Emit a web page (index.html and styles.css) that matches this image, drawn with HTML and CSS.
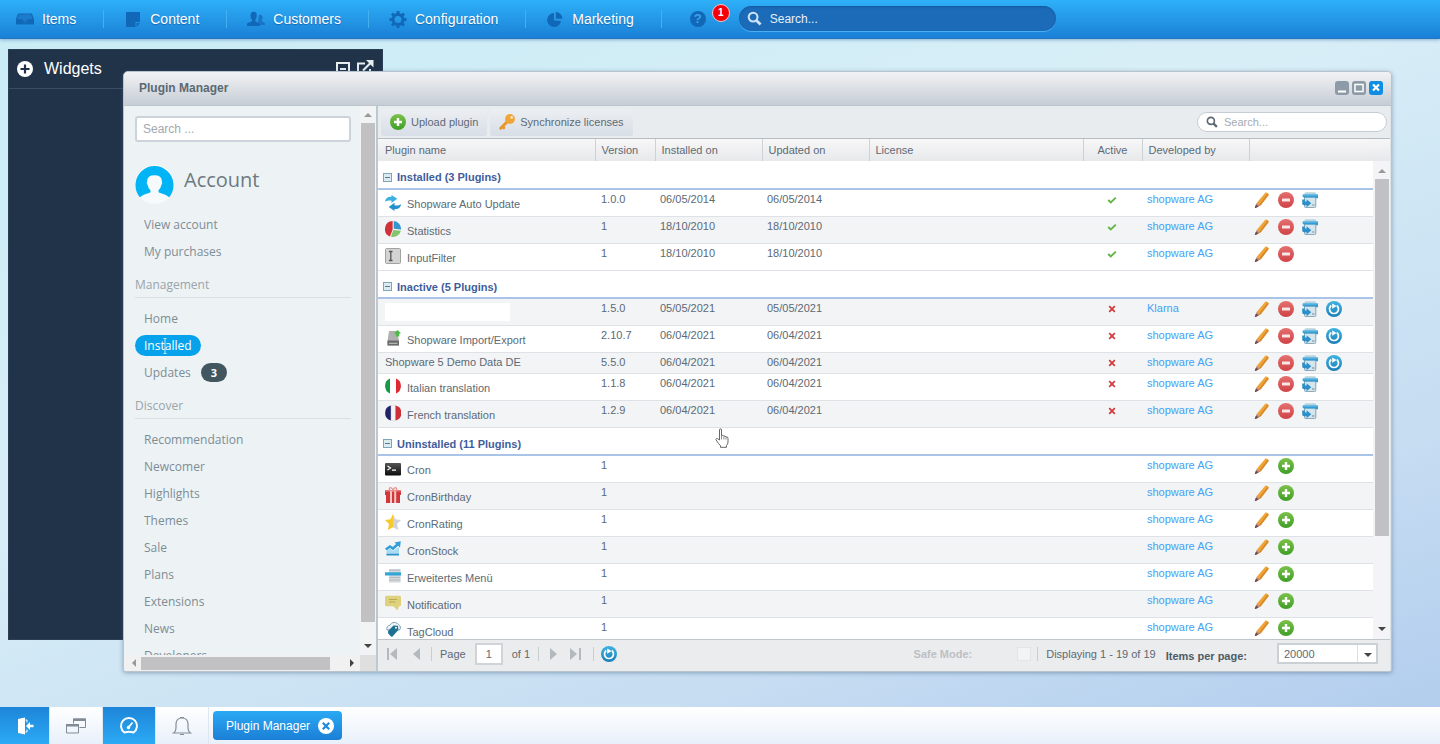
FILE: index.html
```html
<!DOCTYPE html>
<html lang="en">
<head>
  <meta charset="UTF-8">
  <meta name="viewport" content="width=device-width, initial-scale=1.0">
  <title>Plugin Manager</title>
  <link rel="stylesheet" href="styles.css">
</head>
<body>
  <!-- icon sprite -->
  <svg class="sprite" aria-hidden="true">
    <defs>
      <linearGradient id="g-red" x1="0" y1="0" x2="0" y2="1"><stop offset="0" stop-color="#e4706f"/><stop offset="1" stop-color="#cf4346"/></linearGradient>
      <linearGradient id="g-green" x1="0" y1="0" x2="0" y2="1"><stop offset="0" stop-color="#7cc14a"/><stop offset="1" stop-color="#3f9e26"/></linearGradient>
      <linearGradient id="g-blue" x1="0" y1="0" x2="0" y2="1"><stop offset="0" stop-color="#3fb3e2"/><stop offset="1" stop-color="#1c7fb8"/></linearGradient>
      <linearGradient id="g-dark" x1="0" y1="0" x2="0" y2="1"><stop offset="0" stop-color="#555"/><stop offset="1" stop-color="#0c0c0e"/></linearGradient>
    </defs>
    <symbol id="i-pencil" viewBox="0 0 16 16"><path d="M11.300 .7c1-1.100 3.900 .9 3.300 2.400L6.600 13.500 2.800 10.700z" fill="#f0a337"/><path d="M13.600 1.500 14.700 3 6.600 13.500 5.200 12.500z" fill="#d98a2a"/><path d="M2.800 10.700 6.600 13.500 1.600 15.900c-.5.100-.8-.1-.7-.6z" fill="#c08a6c"/><path d="M2 12.500 4.500 14.500 1.600 15.900c-.5.100-.8-.1-.7-.6z" fill="#6e4a4c"/></symbol>
    <symbol id="i-minus" viewBox="0 0 16 16"><circle cx="8" cy="8" r="8" fill="url(#g-red)"/><rect x="4" y="6.500" width="8" height="3" rx=".5" fill="#f9e6e6"/></symbol>
    <symbol id="i-plus" viewBox="0 0 16 16"><circle cx="8" cy="8" r="8" fill="url(#g-green)"/><path d="M6.800 4h2.400v2.800H12v2.400H9.200V12H6.800V9.200H4V6.800h2.800z" fill="#fff"/></symbol>
    <symbol id="i-reinstall" viewBox="0 0 16 16"><path d="M2.500 1.500Q2.500 .3 4 .3h8.500q1.500 0 1.500 1.200V3H2.500z" fill="#b9d3df"/><path d="M2.500 5h11.300v9.300q0 1.300-1.300 1.300H3.800q-1.300 0-1.300-1.300z" fill="#d5e5ed" stroke="#86a3b1"/><path d="M1 2.300h14q1 0 1 1v2.900h-2.300V5.500H2Q-.3 5.300 1 2.300z" fill="#359bd3"/><path d="M1.200 2.300h14v1.200H.8z" fill="#72c3ea"/><path d="M.2 7.500v3.900q0 1.800 1.800 1.800h2.600V15.300L9.300 11.200 4.600 7.200V9.500H2.800V7.500z" fill="#2c8fc9"/><path d="M10 13h2.500" stroke="#8197a3" stroke-width="1.200"/></symbol>
    <symbol id="i-refresh" viewBox="0 0 16 16"><circle cx="8" cy="8" r="8" fill="url(#g-blue)"/><path d="M5.200 4.500A4.500 4.500 0 1 0 10.800 4.500" fill="none" stroke="#fff" stroke-width="1.700"/><path d="M6.200 2.500v5.200L10.600 5z" fill="#fff"/></symbol>
    <symbol id="i-check" viewBox="0 0 10 10"><path d="M1.200 5 3.800 7.500 8.800 2.600" fill="none" stroke="#62b646" stroke-width="1.900"/></symbol>
    <symbol id="i-cross" viewBox="0 0 10 10"><path d="M2.200 2.200 7.800 7.800M7.800 2.200 2.200 7.800" stroke="#d33c3c" stroke-width="1.800"/></symbol>
    <symbol id="i-key" viewBox="0 0 16 16"><path d="M9 7 1.700 14.200M3.500 12.500 4.800 13.800" stroke="#e9962c" stroke-width="3" stroke-linecap="round"/><circle cx="11" cy="5" r="4.900" fill="#f0a637"/><circle cx="12.700" cy="3.400" r="1.300" fill="#f4e9d8"/></symbol>
    <symbol id="i-search" viewBox="0 0 16 16"><circle cx="6.500" cy="6.500" r="4.700" fill="none" stroke="currentColor" stroke-width="2.200"/><path d="M9.800 9.800 14.500 14.500" stroke="currentColor" stroke-width="3"/></symbol>

    <symbol id="i-update" viewBox="0 0 16 16"><path d="M0 6.800C.5 2.800 3.500 1.300 6.500 1.800V0L12.300 3.800 6.500 8V5.700C4 5.200 2 5.500 0 6.800z" fill="#3db0e2"/><path d="M16 9.200C15.500 13.200 12.500 14.500 9.500 14V16L3.700 12 9.500 7.800V10.200C12 10.700 14 10.500 16 9.200z" fill="#2391cb"/></symbol>
    <symbol id="i-stats" viewBox="0 0 16 16"><path d="M7.600 .1v8.400L5 15.500A8 8 0 0 1 7.600 .1z" fill="#cf3338"/><path d="M8.700 .1A7.900 7.900 0 0 1 16 8.500L8.700 7.800z" fill="#3597d0"/><path d="M8.300 9 15.900 9.800A8 8 0 0 1 6 15.700z" fill="#84c46c"/></symbol>
    <symbol id="i-input" viewBox="0 0 16 16"><rect x=".5" y=".5" width="15" height="15" rx="1" fill="#d3d3d3" stroke="#a2a2a2"/><path d="M4 3.500H7.500M4 12.500H7.500M5.800 3.500V12.500" stroke="#555" stroke-width="1.300"/></symbol>
    <symbol id="i-drive" viewBox="0 0 16 16"><path d="M4 1H12L14 11V15.500H2.500V11z" fill="#b0b0b0"/><path d="M2.500 10.500H14V15.500H2.500z" fill="#6a6a6a"/><path d="M4 13.300H12.500" stroke="#c9c9c9"/><path d="M12.500 0 16 3.300 14.200 3.800V6.500H10.800V3.800L9 3.300z" fill="#4dbb48"/></symbol>
    <symbol id="i-italy" viewBox="0 0 16 16"><path d="M5 .6A8 8 0 0 0 5 15.400z" fill="#169a4a"/><path d="M5 .6Q8-.4 11 .6V15.400Q8 16.400 5 15.400z" fill="#fff"/><path d="M11 .6A8 8 0 0 1 11 15.400z" fill="#dc2a30"/></symbol>
    <symbol id="i-france" viewBox="0 0 16 16"><path d="M6 .6A7.600 7.600 0 0 0 6 15.400z" fill="#22246b"/><path d="M6 .6Q8 .1 10.500 .6V15.400Q8 15.900 6 15.400z" fill="#f5f3f5" stroke="#ccc" stroke-width=".4"/><path d="M10.500 .6A7.600 7.600 0 0 1 10.500 15.400z" fill="#cf3038"/></symbol>
    <symbol id="i-cron" viewBox="0 0 16 16"><rect y="2" width="16" height="12.500" rx="1" fill="url(#g-dark)"/><path d="M2.500 5 5.500 7 2.500 9M7 9.200H11" fill="none" stroke="#fff" stroke-width="1.200"/></symbol>
    <symbol id="i-gift" viewBox="0 0 16 16"><path d="M0 3.500H16V8H15V16H1V8H0z" fill="#d2383b"/><path d="M0 3.500H16V5H0z" fill="#e25b5b"/><path d="M5 3.500H7V16H5zM9.200 3.500H11.200V16H9.200z" fill="#f6c9c4"/><path d="M8 3.700C3 4.500 4 .3 5.700 .7 7 1 7.800 2.500 8 3.700 8.300 2.500 9 1 10.300 .7 12 .3 13 4.500 8 3.700z" fill="none" stroke="#e79693" stroke-width="1.300"/></symbol>
    <symbol id="i-star" viewBox="0 0 16 16"><path d="M8 0 10.500 5.300 16 6 12 10 13.200 16 8 13.200z" fill="#d2d2d6"/><path d="M8 0 5.500 5.300 0 6 4 10 2.800 16 8 13.200z" fill="#f7ca2b"/></symbol>
    <symbol id="i-stock" viewBox="0 0 16 16"><path d="M.8 8.500 5 5.500 8 7.500 12.500 3.500" fill="none" stroke="#31a0d8" stroke-width="2.600"/><path d="M9.500 1.500 15.800 .3 15 6.500z" fill="#31a0d8"/><path d="M1.500 10 5 7.800 8.200 10 14 6V14.500H1.500z" fill="#a8daf2"/><path d="M1.500 13.600H14" stroke="#2f93c8" stroke-width="1.600"/></symbol>
    <symbol id="i-menu" viewBox="0 0 16 16"><path d="M4 1H15.500V14.500H4z" fill="#d3d8dc"/><path d="M4 2.200H15.500M4 9.500H15.500M4 12H15.500" stroke="#b4bbc1"/><path d="M0 4.300H16V7.500H0z" fill="#34a5d7"/></symbol>
    <symbol id="i-note" viewBox="0 0 16 16"><path d="M1.500 .8H14.500Q16 .8 16 2.300V9.700Q16 11.200 14.500 11.200H14L12.500 15.500 8.300 11.200H1.500Q0 11.200 0 9.700V2.300Q0 .8 1.500 .8z" fill="#dfd27e"/><path d="M4 4.500H12M4 7H10.500" stroke="#b9a953" stroke-width="1.100"/></symbol>
    <symbol id="i-tag" viewBox="0 0 16 16"><path d="M2 8A4 4 0 0 1 5 3.200 5 5 0 0 1 13.500 2.500 3.500 3.500 0 0 1 14.500 8z" fill="#eef4f7" stroke="#7d9fae"/><path d="M3.500 8.500 8.500 3.500 13 3.800 13.300 8 7.500 14.500Q6.800 15 6 14.500L3.300 11.500Q2.500 10 3.500 8.500z" fill="#1f7193"/><circle cx="11" cy="5.800" r="1" fill="#fff"/></symbol>
  </svg>

  <header class="topbar">
    <nav class="menu">
      <a href="#"><svg viewBox="0 0 18 18"><path d="M2.500 4H15.500L17.500 9.500H12Q11.500 12 9 12T6 9.500H.5z" fill="#1c7ccc" stroke="#1268b8" stroke-width="1.200"/><path d="M0 9.500H5.500Q6.500 12.500 9 12.500T12.500 9.500H18V14.500H0z" fill="#1268b8"/></svg>Items</a>
      <a href="#"><svg viewBox="0 0 18 18"><path d="M2 2H16V12H11.500V17H2z" fill="#1268b8"/><path d="M12.500 13H16L12.500 17z" fill="#1268b8"/></svg>Content</a>
      <a href="#"><svg viewBox="0 0 18 18"><path d="M12 5A2.500 2.500 0 0 1 15.500 8Q15.200 10 14.500 11L18 13V15H13.500L11 11.500z" fill="#1a74c4"/><path d="M3.500 5.500A3 3.500 0 0 1 9.800 5.500Q9.800 8.500 8.300 10V11.300L13 13.500V16H0V13.500L5 11.300V10Q3.500 8.500 3.500 5.500z" fill="#1268b8"/></svg>Customers</a>
      <a href="#"><svg viewBox="0 0 18 18"><circle cx="9" cy="9.500" r="5" fill="none" stroke="#1268b8" stroke-width="3"/><path d="M9 1V4M9 15V18M.5 9.500H3.500M14.500 9.500H17.500M3 3.500 5 5.500M13 13.500 15 15.500M15 3.500 13 5.500M5 13.500 3 15.500" stroke="#1268b8" stroke-width="3"/></svg>Configuration</a>
      <a href="#"><svg viewBox="0 0 18 18"><path d="M8 3A7 7 0 1 0 15 11L8 10.500z" fill="#1268b8"/><path d="M9.800 1.800A7.500 7.500 0 0 1 16.500 8.800H9.800z" fill="#1268b8"/></svg>Marketing</a>
    </nav>
    <button class="help" aria-label="Help">?</button>
    <span class="alert-count">1</span>
    <label class="top-search">
      <svg><use href="#i-search"/></svg>
      <input type="text" placeholder="Search..." aria-label="Search">
    </label>
  </header>

  <main class="desktop">
    <section class="widgets">
      <header>
        <svg viewBox="0 0 16 16"><circle cx="8" cy="8" r="8" fill="#fff"/><path d="M8 3.500V12.500M3.500 8H12.500" stroke="#20324a" stroke-width="2.200"/></svg>
        <h2>Widgets</h2>
        <button aria-label="Minimize"><svg viewBox="0 0 18 18"><path d="M3 3H15V16H3zM6 9H12" fill="none" stroke="#e8edf2" stroke-width="2"/></svg></button>
        <button aria-label="Detach"><svg viewBox="0 0 18 18"><path d="M9 3.500H2V16H14V9" fill="none" stroke="#e8edf2" stroke-width="2"/><path d="M7 10.500 14.500 3" stroke="#e8edf2" stroke-width="2.200"/><path d="M10 0H17.500V7.500z" fill="#e8edf2"/></svg></button>
      </header>
    </section>

    <section class="window">
      <header class="titlebar">
        <h1>Plugin Manager</h1>
        <button aria-label="Minimize"><svg viewBox="0 0 14 14"><path d="M3 10.500H11" stroke="#fff" stroke-width="2"/></svg></button>
        <button aria-label="Maximize"><svg viewBox="0 0 14 14"><path d="M3 3.500H11V10.500H3z" fill="none" stroke="#fff" stroke-width="1.500"/></svg></button>
        <button class="close" aria-label="Close"><svg viewBox="0 0 14 14"><path d="M4 3.500 10 9.500M10 3.500 4 9.500" stroke="#fff" stroke-width="2.200"/></svg></button>
      </header>

      <div class="window-body">
        <aside class="sidebar">
          <div class="side-main">
            <div class="side-content">
              <input class="side-search" type="text" placeholder="Search ..." aria-label="Search plugins">
              <div class="account">
                <svg viewBox="0 0 40 40"><circle cx="20" cy="20" r="20" fill="#f7fafb"/><path d="M5 33A19.500 19.500 0 1 1 35 33Q32 30.500 25 28.500C23.800 28 23.800 26.500 24.500 25.500Q26.500 23.500 27 20.500 28.500 19 27.500 17 28 10.500 20 10.500T12.500 17Q11.500 19 13 20.500 13.500 23.500 15.500 25.500C16.200 26.500 16.200 28 15 28.500Q8 30.500 5 33z" fill="#00b4f5"/></svg>
                <h2>Account</h2>
              </div>
              <nav class="side-nav">
                <a href="#">View account</a>
                <a href="#">My purchases</a>
              </nav>
              <h3>Management</h3>
              <nav class="side-nav">
                <a href="#">Home</a>
                <a href="#" class="active"><span>Installed<svg class="beam" viewBox="0 0 6 16"><path d="M1.500 .5H4.500M3 .5V15.500M1.500 15.500H4.500" stroke="#bfe4f7"/></svg></span></a>
                <a href="#">Updates <b>3</b></a>
              </nav>
              <h3>Discover</h3>
              <nav class="side-nav">
                <a href="#">Recommendation</a>
                <a href="#">Newcomer</a>
                <a href="#">Highlights</a>
                <a href="#">Themes</a>
                <a href="#">Sale</a>
                <a href="#">Plans</a>
                <a href="#">Extensions</a>
                <a href="#">News</a>
                <a href="#">Developers</a>
              </nav>
            </div>
            <div class="scroll-v">
              <i class="arrow up"></i><div class="thumb"></div><i class="arrow down"></i>
            </div>
          </div>
          <div class="scroll-h">
            <i class="arrow left"></i><div class="thumb"></div><i class="arrow right"></i><span class="corner"></span>
          </div>
        </aside>

        <div class="content">
          <div class="toolbar">
            <button><svg><use href="#i-plus"/></svg>Upload plugin</button>
            <button><svg><use href="#i-key"/></svg>Synchronize licenses</button>
            <label class="grid-search">
              <svg><use href="#i-search"/></svg>
              <input type="text" placeholder="Search..." aria-label="Search grid">
            </label>
          </div>

          <div class="grid">
            <div class="grid-view">
              <table>
                <colgroup>
                  <col class="c-name"><col class="c-version"><col class="c-date"><col class="c-date">
                  <col><col class="c-active"><col class="c-date"><col class="c-actions">
                </colgroup>
                <thead>
                  <tr>
                    <th>Plugin name</th><th>Version</th><th>Installed on</th><th>Updated on</th>
                    <th>License</th><th class="center">Active</th><th>Developed by</th><th></th>
                  </tr>
                </thead>
                <tbody id="rows"></tbody>
              </table>
            </div>
            <div class="scroll-v grid-scroll">
              <i class="arrow up"></i><div class="thumb"></div><i class="arrow down"></i>
            </div>
          </div>

          <footer class="paging">
            <button aria-label="First page"><svg viewBox="0 0 12 12"><path d="M1 0H3V12H1zM11 0V12L4 6z"/></svg></button>
            <button class="prev" aria-label="Previous page"><svg viewBox="0 0 12 12"><path d="M9 0V12L2 6z"/></svg></button>
            <i class="sep"></i>
            <label for="page">Page</label>
            <input id="page" type="text" value="1">
            <span class="of">of 1</span>
            <i class="sep"></i>
            <button aria-label="Next page"><svg viewBox="0 0 12 12"><path d="M3 0 10 6 3 12z"/></svg></button>
            <button class="last" aria-label="Last page"><svg viewBox="0 0 12 12"><path d="M0 0 7 6 0 12zM9 0H11V12H9z"/></svg></button>
            <i class="sep"></i>
            <button class="reload" aria-label="Refresh"><svg><use href="#i-refresh"/></svg></button>
            <label class="safe" for="safe">Safe Mode:</label>
            <input id="safe" type="checkbox" disabled>
            <i class="sep"></i>
            <span class="info">Displaying 1 - 19 of 19</span>
            <label class="per-page" for="size">Items per page:</label>
            <div class="combo">
              <select id="size"><option>20000</option></select>
              <i class="arrow down"></i>
            </div>
          </footer>
        </div>
      </div>
    </section>

    <svg class="pointer" viewBox="0 0 14 20"><path d="M4.500 12V2Q4.500 .8 5.500 .8T6.500 2V7.500Q8.500 6.800 9 8.200 10.500 7.500 11 9 13 8.500 13 10.500V14Q13 16 11.500 17.500V19.300H5.500V17.800Q4 16.500 1 11.800C.4 10.500 2.200 10 3 11z" fill="#fff" stroke="#666" stroke-width="1"/><path d="M6.500 8V11.500M8.900 8.500V11.500M11 9.500V11.500" stroke="#666" stroke-width=".8"/></svg>
  </main>

  <footer class="taskbar">
    <button class="blue logout" aria-label="Logout"><svg viewBox="0 0 20 20"><path d="M3 3 10 1.500V18.500L3 17z" fill="#fff"/><path d="M10.500 4H12V6.500M10.500 16H12V13.500" fill="none" stroke="#fff"/><path d="M11 10 15 6V8.800H18.500V11.200H15V14z" fill="#fff"/></svg></button>
    <button class="light" aria-label="Windows"><svg viewBox="0 0 20 20"><path d="M7.500 3H19.500V11.500H13.500M7.500 3V7.500M.5 8.500H12.500V17H.5z" fill="none" stroke="#818b96"/><path d="M7 2.500H20V5H7zM0 8H13V10.500H0z" fill="#818b96"/></svg></button>
    <button class="blue" aria-label="Widgets"><svg viewBox="0 0 20 20"><path d="M5.500 16.500A8 8 0 1 1 14.500 16.500Q10 15 5.500 16.500z" fill="none" stroke="#fff" stroke-width="2"/><path d="M9 12 13.500 6.500" stroke="#fff" stroke-width="1.800"/><circle cx="9.500" cy="11.500" r="1.700" fill="#fff"/></svg></button>
    <button class="light bell" aria-label="Notifications"><svg viewBox="0 0 20 20"><path d="M1.500 17Q4 15.500 4 11V7.500Q4.500 2 10 2T16 7.500V11Q16 15.500 18.500 17zM8 1.500H12M8 18.500H12" fill="none" stroke="#858d96" stroke-width="1.200"/></svg></button>
    <button class="task">Plugin Manager<svg viewBox="0 0 16 16"><circle cx="8" cy="8" r="8" fill="#fff"/><path d="M4.800 4.800 11.200 11.200M11.200 4.800 4.800 11.200" stroke="#1c8be0" stroke-width="2.200"/></svg></button>
  </footer>

  <script>
    // icon, name, version, installed, updated, active, vendor, actions
    const groups = [
      { title: 'Installed (3 Plugins)', rows: [
        ['update', 'Shopware Auto Update', '1.0.0', '06/05/2014', '06/05/2014', 'check', 'shopware AG', ['pencil', 'minus', 'reinstall']],
        ['stats', 'Statistics', '1', '18/10/2010', '18/10/2010', 'check', 'shopware AG', ['pencil', 'minus', 'reinstall']],
        ['input', 'InputFilter', '1', '18/10/2010', '18/10/2010', 'check', 'shopware AG', ['pencil', 'minus']]
      ]},
      { title: 'Inactive (5 Plugins)', rows: [
        ['', '', '1.5.0', '05/05/2021', '05/05/2021', 'cross', 'Klarna', ['pencil', 'minus', 'reinstall', 'refresh']],
        ['drive', 'Shopware Import/Export', '2.10.7', '06/04/2021', '06/04/2021', 'cross', 'shopware AG', ['pencil', 'minus', 'reinstall', 'refresh']],
        ['', 'Shopware 5 Demo Data DE', '5.5.0', '06/04/2021', '06/04/2021', 'cross', 'shopware AG', ['pencil', 'minus', 'reinstall', 'refresh']],
        ['italy', 'Italian translation', '1.1.8', '06/04/2021', '06/04/2021', 'cross', 'shopware AG', ['pencil', 'minus', 'reinstall']],
        ['france', 'French translation', '1.2.9', '06/04/2021', '06/04/2021', 'cross', 'shopware AG', ['pencil', 'minus', 'reinstall']]
      ]},
      { title: 'Uninstalled (11 Plugins)', rows: [
        ['cron', 'Cron'], ['gift', 'CronBirthday'], ['star', 'CronRating'], ['stock', 'CronStock'],
        ['menu', 'Erweitertes Menü'], ['note', 'Notification'], ['tag', 'TagCloud']
      ].map(r => [...r, '1', '', '', '', 'shopware AG', ['pencil', 'plus']]) }
    ];
    const labels = { pencil: 'Edit', minus: 'Uninstall', plus: 'Install', reinstall: 'Reinstall', refresh: 'Update' };
    const icon = name => `<svg><use href="#i-${name}"/></svg>`;

    let html = '';
    let count = 0;
    groups.forEach(group => {
      html += `<tr class="group"><td colspan="8"><button><i></i>${group.title}</button></td></tr>`;
      group.rows.forEach(([ico, name, version, installed, updated, active, vendor, actions]) => {
        const nameCell = ico ? `<div class="with-icon">${icon(ico)}${name}</div>` : (name || '<div class="blank"></div>');
        const compact = !ico && name ? 'compact' : '';
        html += `
          <tr class="${count++ % 2 ? 'alt' : ''} ${compact}">
            <td>${nameCell}</td><td>${version}</td><td>${installed}</td><td>${updated}</td><td></td>
            <td class="status">${active ? icon(active) : ''}</td>
            <td><a href="#">${vendor}</a></td>
            <td><div class="actions">${actions.map(a => `<button aria-label="${labels[a]}">${icon(a)}</button>`).join('')}</div></td>
          </tr>`;
      });
    });
    document.getElementById('rows').innerHTML = html;
  </script>
</body>
</html>
```
FILE: styles.css
```css
* { box-sizing: border-box; }
body {
  margin: 0;
  height: 100vh;
  display: flex;
  flex-direction: column;
  overflow: hidden;
  font-family: "Liberation Sans", Arial, sans-serif;
  font-size: 11px;
  color: #5c6a75;
  background: linear-gradient(160deg, #c8ecf5 0%, #d8eef7 40%, #c6ddf2 75%, #b0cbed 100%);
}
h1, h2, h3 { margin: 0; font-weight: normal; }
a { text-decoration: none; color: inherit; }
button, input, select { font: inherit; color: inherit; }
button {
  border: 0;
  padding: 0;
  background: none;
  cursor: pointer;
}
svg { display: block; flex: none; }
.sprite { position: absolute; width: 0; height: 0; }

/* top bar */
.topbar {
  height: 39px;
  flex: none;
  display: flex;
  align-items: center;
  padding-bottom: 1px;
  background: linear-gradient(#2eb0f8, #1a80d6);
  border-bottom: 1px solid #2576bf;
  box-shadow: 0 1px 3px rgba(60, 120, 180, .5);
  color: #fff;
}
.menu { display: flex; }
.menu a {
  display: flex;
  align-items: center;
  gap: 8px;
  height: 18px;
  padding: 0 27px 0 20px;
  border-right: 1px solid #46aff0;
  font-size: 14px;
  text-shadow: 0 1px 1px #1669b0;
}
.menu a:first-child { padding-left: 16px; }
.menu svg { width: 18px; height: 18px; }
.help {
  width: 16px;
  height: 16px;
  margin-left: 28px;
  border-radius: 50%;
  background: #1268b8;
  color: #3ba4ec;
  font-size: 13px;
  font-weight: bold;
  line-height: 16px;
}
.alert-count {
  width: 18px;
  height: 18px;
  margin: 0 9px 12px 6px;
  border: 1px solid #f3c5cc;
  border-radius: 50%;
  background: #f30008;
  font-size: 10px;
  font-weight: bold;
  line-height: 16px;
  text-align: center;
}
.top-search {
  display: flex;
  align-items: center;
  gap: 8px;
  width: 22%;
  height: 25px;
  padding: 0 8px;
  border-radius: 13px;
  background: #1b6bb8;
  box-shadow: 0 1px 0 #4aaef0, inset 0 1px 2px #1259a0;
}
.top-search svg { width: 15px; height: 15px; color: #cde3f5; }
.top-search input, .grid-search input {
  flex: 1;
  min-width: 0;
  padding: 0;
  border: 0;
  outline: 0;
  background: none;
}
.top-search input { font-size: 12px; }
.top-search input::placeholder { color: #e4f0fa; opacity: 1; }

/* desktop */
.desktop { flex: 1; position: relative; min-height: 0; }
.widgets {
  position: absolute;
  left: 8px;
  top: 10px;
  bottom: 67px;
  width: 375px;
  border: 1px solid #2c3e55;
  background: #213349;
}
.widgets header {
  display: flex;
  align-items: center;
  gap: 4px;
  height: 39px;
  padding: 0 8px;
  border-bottom: 1px solid #3a4d62;
  color: #fff;
}
.widgets header > svg { width: 16px; height: 16px; }
.widgets h2 { flex: 1; margin-left: 7px; font-size: 16px; }
.widgets button svg { width: 18px; height: 18px; }

.window {
  position: absolute;
  left: 123px;
  right: 48px;
  top: 32px;
  bottom: 35px;
  display: flex;
  flex-direction: column;
  border: 1px solid #b7c3cd;
  border-radius: 5px 5px 3px 3px;
  background: #edf2f4;
  box-shadow: 0 1px 4px rgba(70, 100, 130, .5);
  overflow: hidden;
}
.titlebar {
  display: flex;
  align-items: center;
  gap: 3px;
  height: 34px;
  flex: none;
  padding: 0 8px 2px 15px;
  background: linear-gradient(#f2f2f4, #c6cdd5);
  border-bottom: 1px solid #bdc5cc;
}
.titlebar h1 {
  flex: 1;
  font-size: 12px;
  font-weight: bold;
  color: #5b6973;
}
.titlebar button {
  width: 14px;
  height: 14px;
  border-radius: 3px;
  background: #8c9ba7;
}
.titlebar .close { background: #0f8ee2; }
.window-body {
  flex: 1;
  display: flex;
  min-height: 0;
  border-right: 1px solid #dfe4e8;
}

/* scrollbars */
.arrow {
  width: 0;
  height: 0;
  flex: none;
  border: 4px solid transparent;
}
.arrow.up { border-top: 0; border-bottom: 4px solid #999; }
.arrow.down { border-bottom: 0; border-top: 4px solid #444; }
.arrow.left { border-left: 0; border-right: 4px solid #999; }
.arrow.right { border-right: 0; border-left: 4px solid #444; }
.scroll-v {
  display: flex;
  flex-direction: column;
  align-items: center;
  width: 17px;
  flex: none;
  padding: 7px 0 8px;
  background: #f1f3f5;
}
.scroll-v .thumb { width: 14px; flex: 1; margin: 6px 0 22px; background: #c1c1c3; }
.scroll-h {
  display: flex;
  align-items: center;
  height: 16px;
  flex: none;
  padding-left: 8px;
  background: #f1f1f2;
}
.scroll-h .thumb { height: 13px; flex: 1; margin: 0 20px 0 5px; background: #c1c1c3; }
.corner { width: 16px; height: 16px; margin-left: 6px; background: #dfdfe0; }

/* sidebar */
.sidebar {
  display: flex;
  flex-direction: column;
  width: 254px;
  flex: none;
  border-right: 2px solid #bcc9d0;
  font-family: "Open Sans", sans-serif;
  font-size: 12px;
  color: #7d8d94;
}
.side-main { flex: 1; display: flex; min-height: 0; }
.side-content { flex: 1; padding: 10px 9px 0 11px; overflow: hidden; }
.side-main .scroll-v { padding-bottom: 7px; width: 16px; }
.side-search {
  display: block;
  width: 100%;
  height: 26px;
  padding: 0 6px;
  border: 2px solid #cdd3da;
  border-radius: 3px;
  background: #fff;
  font-family: "Liberation Sans", Arial, sans-serif;
  outline: 0;
}
.side-search::placeholder { color: #a3a9b0; opacity: 1; }
.account {
  display: flex;
  gap: 10px;
  margin: 23px 0 7px;
}
.account svg { width: 39px; height: 39px; }
.account h2 { font-size: 20px; line-height: 29px; color: #6c7a80; }
.side-nav a {
  display: flex;
  align-items: center;
  gap: 10px;
  height: 27px;
  padding-left: 9px;
}
.side-nav .active { padding-left: 0; }
.active span {
  position: relative;
  padding: 0 9px;
  border-radius: 11px;
  background: #06a3ec;
  color: #fff;
  line-height: 21px;
}
.beam {
  position: absolute;
  left: 27px;
  top: 3px;
  width: 6px;
  height: 16px;
}
.side-nav b {
  width: 26px;
  border-radius: 10px;
  background: #42565f;
  color: #fff;
  font-size: 11px;
  line-height: 19px;
  text-align: center;
}
.sidebar h3 {
  height: 33px;
  margin-bottom: 7px;
  border-bottom: 1px solid #d9dfe3;
  font-size: 12px;
  line-height: 40px;
  color: #99a5ac;
}

/* plugin list */
.content { flex: 1; display: flex; flex-direction: column; min-width: 0; }
.toolbar {
  display: flex;
  align-items: center;
  gap: 3px;
  height: 33px;
  flex: none;
  padding: 0 3px;
  background: #e9ecef;
  border-bottom: 1px solid #b5bcc2;
}
.toolbar button {
  display: flex;
  align-items: center;
  gap: 5px;
  height: 27px;
  padding: 0 9px;
  border-radius: 3px;
  background: linear-gradient(#eceff2, #d8dee7);
}
.toolbar button svg { width: 16px; height: 16px; }
.grid-search {
  display: flex;
  align-items: center;
  gap: 6px;
  width: 190px;
  height: 20px;
  margin-left: auto;
  padding: 0 8px;
  border: 1px solid #c5ccd3;
  border-radius: 10px;
  background: #fff;
}
.grid-search svg { width: 12px; height: 12px; color: #5d6770; }
.grid-search input::placeholder { color: #a5abb2; opacity: 1; }

.grid { flex: 1; display: flex; min-height: 0; background: #fff; }
.grid-view { flex: 1; overflow: hidden; }
.grid-view table { width: 100%; table-layout: fixed; border-collapse: collapse; }
.c-name { width: 217px; }
.c-version { width: 60px; }
.c-date { width: 107px; }
.c-active { width: 59px; }
.c-actions { width: 124px; }
th {
  height: 22px;
  padding: 0 6px;
  background: linear-gradient(#f7f7f8, #e7e8ea);
  border-right: 1px solid #cdd2d6;
  font-weight: normal;
  text-align: left;
}
th:last-child { border-right: 0; }
th.center { text-align: center; }
td {
  height: 27px;
  padding: 2px 6px 0;
  border-bottom: 1px solid #dee1e5;
  line-height: 14px;
  vertical-align: top;
  white-space: nowrap;
}
th:first-child, td:first-child { padding-left: 7px; }
td:nth-child(n+3) { padding-left: 5px; }
.alt td { background: #f3f4f6; }
.compact td { height: 21px; }
.group td {
  height: 28px;
  padding: 9px 4px 0 5px;
  border-bottom: 2px solid #a9c4e6;
}
.group button {
  display: flex;
  align-items: center;
  gap: 5px;
  font-weight: bold;
  color: #3f5d9b;
}
.group i {
  width: 9px;
  height: 9px;
  border: 1px solid #7fa6b8;
  background: linear-gradient(#4d7f95, #4d7f95) center / 5px 1px no-repeat #dcebf0;
}
td a { color: #45a1f3; }
td svg { width: 16px; height: 16px; }
.with-icon {
  display: flex;
  align-items: center;
  gap: 6px;
  padding-top: 2px;
  line-height: 20px;
}
.with-icon svg { margin-bottom: 3px; }
.blank { width: 125px; height: 18px; margin-top: 2px; background: #fff; }
.status svg { width: 10px; height: 10px; margin: 3px auto 0; }
.actions { display: flex; gap: 8px; }

.grid-scroll {
  padding-top: 30px;
  background: linear-gradient(#f7f7f8, #e7e8ea) top / 100% 22px no-repeat #f4f4f6;
}
.grid-scroll .thumb { margin: 6px 0 91px; }

/* paging bar */
.paging {
  display: flex;
  align-items: center;
  height: 32px;
  flex: none;
  padding: 0 12px 4px 8px;
  background: #ebecee;
  border-top: 1px solid #c0c5c9;
}
.paging button svg { width: 12px; height: 12px; fill: #b4b9be; }
.paging .prev { margin-left: 13px; }
.paging .last { margin-left: 11px; }
.paging .reload { margin-left: -1px; }
.paging .reload svg { width: 16px; height: 16px; }
.sep { width: 1px; height: 14px; margin: 0 8px; background: #c9cdd1; }
.last + .sep { margin-left: 11px; }
.paging #page {
  width: 28px;
  height: 22px;
  margin: 0 9px;
  padding: 0;
  border: 2px solid #d0d4d8;
  background: #fff;
  text-align: center;
}
.safe { margin-left: auto; color: #bcc0c4; font-weight: bold; }
#safe {
  appearance: none;
  width: 14px;
  height: 14px;
  margin: 0 0 0 45px;
  border: 1px solid #e3e4e6;
  background: #f3f3f4;
}
#safe + .sep { margin-left: 6px; }
.per-page {
  margin-left: 10px;
  padding-top: 5px;
  color: #4d5b66;
  font-weight: bold;
}
.combo {
  position: relative;
  margin-left: 30px;
}
.combo select {
  appearance: none;
  display: block;
  width: 101px;
  height: 21px;
  padding: 0 5px;
  border: 2px solid #cbd0d5;
  border-radius: 0;
  background: linear-gradient(#dde0e3, #dde0e3) right 18px top / 1px 100% no-repeat #fff;
}
.combo .arrow { position: absolute; right: 6px; top: 10px; }

.pointer {
  position: absolute;
  left: 715px;
  top: 389px;
  width: 14px;
  height: 20px;
}

/* taskbar */
.taskbar {
  display: flex;
  align-items: center;
  height: 37px;
  flex: none;
  background: linear-gradient(#fff, #e8f0fb);
}
.taskbar > .blue, .taskbar > .light {
  display: flex;
  align-items: center;
  justify-content: center;
  width: 53px;
  height: 37px;
  border-right: 1px solid #dfe6ee;
}
.taskbar > .logout { width: 50px; }
.taskbar svg { width: 20px; height: 20px; }
.taskbar .blue { background: linear-gradient(#1e85d8, #2baaf5); }
.taskbar .task {
  display: flex;
  align-items: center;
  gap: 8px;
  height: 29px;
  margin-left: 4px;
  padding: 0 8px 0 13px;
  border-radius: 4px;
  background: linear-gradient(#2aa9f4, #1b7fd6);
  color: #fff;
  font-size: 12px;
}
.taskbar .task svg { width: 16px; height: 16px; }
```
